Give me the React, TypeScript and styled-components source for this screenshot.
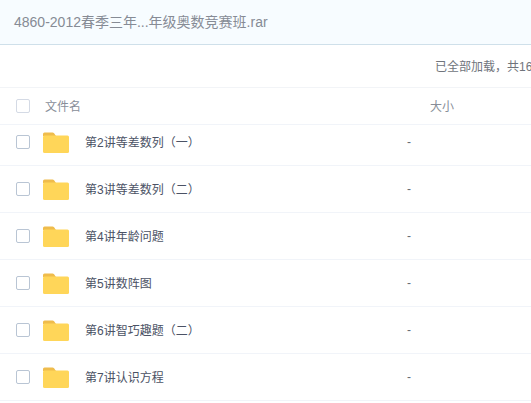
import React from 'react';
import styled, { createGlobalStyle } from 'styled-components';

const GlobalStyle = createGlobalStyle`
  html, body {
    margin: 0;
    padding: 0;
    height: 100%;
    overflow: hidden;
    background: #fff;
  }
  body {
    font-family: "Liberation Sans", "Noto Sans CJK SC", sans-serif;
  }
`;

const Page = styled.div`
  width: 531px;
  height: 403px;
  overflow: hidden;
`;

const TitleBar = styled.div`
  height: 44px;
  display: flex;
  align-items: center;
  padding-left: 14px;
  background: #f7fcff;
  border-bottom: 1px solid #cfe0ea;
  font-size: 14px;
  color: #868b95;
  white-space: nowrap;
`;

const Label = styled.span`
  padding-bottom: 2px;
`;

const StatusBar = styled.div`
  height: 42px;
  display: flex;
  align-items: center;
  padding-left: 435px;
  border-bottom: 1px solid #f2f4f7;
  font-size: 12px;
  color: #70747c;
  white-space: nowrap;
`;

const Row = styled.div<{ $height: number; $clipped?: number }>`
  height: ${(p) => p.$height}px;
  padding-bottom: ${(p) => p.$clipped ?? 0}px;
  display: flex;
  align-items: center;
  padding-left: 16px;
  border-bottom: 1px solid #f1f4f9;
  white-space: nowrap;
`;

const Checkbox = styled.span<{ $light?: boolean }>`
  box-sizing: border-box;
  flex: none;
  width: 14px;
  height: 14px;
  border: 1px solid ${(p) => (p.$light ? '#d4dae5' : '#b9c5d4')};
  border-radius: 2px;
  background: #fff;
`;

const HeadName = styled(Label)`
  width: 385px;
  margin-left: 15px;
  font-size: 12px;
  color: #888e99;
`;

const HeadSize = styled(Label)`
  font-size: 12px;
  color: #888e99;
`;

const FolderIcon = styled.svg`
  flex: none;
  width: 26px;
  height: 22px;
  margin-left: 13px;
`;

const FileName = styled(Label)`
  width: 322px;
  margin-left: 16px;
  font-size: 12px;
  color: #4b5265;
`;

const FileSize = styled.span`
  font-size: 12px;
  color: #666b75;
`;

const Folder = () => (
  <FolderIcon viewBox="0 0 26 22">
    <path d="M0 3a1.5 1.5 0 0 1 1.5-1.5h8a2 2 0 0 1 1.6.8L13 5H0z" fill="#efbc4c" />
    <rect x="0" y="4.5" width="26" height="17.5" rx="1.5" fill="#ffd659" />
  </FolderIcon>
);

// the list is scrolled a little, so the first row loses its top behind the header
const files = [
  { name: '第2讲等差数列（一）', height: 34, clipped: 6 },
  { name: '第3讲等差数列（二）', height: 46 },
  { name: '第4讲年龄问题', height: 46 },
  { name: '第5讲数阵图', height: 46 },
  { name: '第6讲智巧趣题（二）', height: 46 },
  { name: '第7讲认识方程', height: 46 },
];

export default function App() {
  return (
    <Page>
      <GlobalStyle />
      <TitleBar>
        <Label>4860-2012春季三年...年级奥数竞赛班.rar</Label>
      </TitleBar>
      <StatusBar>
        <Label>已全部加载，共16个</Label>
      </StatusBar>
      <Row $height={36}>
        <Checkbox $light />
        <HeadName>文件名</HeadName>
        <HeadSize>大小</HeadSize>
      </Row>
      {files.map((file) => (
        <Row key={file.name} $height={file.height} $clipped={file.clipped}>
          <Checkbox />
          <Folder />
          <FileName>{file.name}</FileName>
          <FileSize>-</FileSize>
        </Row>
      ))}
    </Page>
  );
}
